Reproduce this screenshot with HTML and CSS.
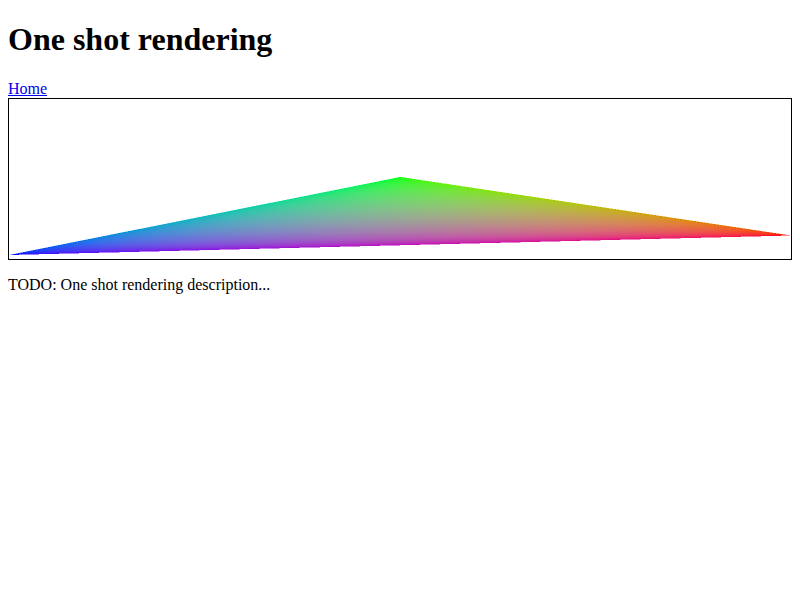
FILE: index.html
```html
<!DOCTYPE html>
<html lang="en">
<head>
  <meta charset="UTF-8" />
  <title>One shot rendering</title>
  <link rel="stylesheet" href="styles.css">
</head>
<body>
  <h1>One shot rendering</h1>
  <a href="#">Home</a>
  <canvas id="tela" class="tela" width="782" height="160"></canvas>
  <p>TODO: One shot rendering description...</p>
  <script src="script.js"></script>
</body>
</html>
```

FILE: styles.css
```css
body {
  margin: 0 8px 8px;
  font-family: "Liberation Serif", serif;
}

.tela {
  display: block;
  width: 100%;
  box-sizing: border-box;
  border: 1px solid #000;
}
```

FILE: script.js
```js
const canvas = document.getElementById("tela");
const ctx = canvas.getContext("2d");
const img = ctx.createImageData(canvas.width, canvas.height);

// canvas coords, one vertex per colour channel
const r = [782, 136.5];
const g = [391.5, 78];
const b = [0, 156];

const area = (g[0] - r[0]) * (b[1] - r[1]) - (g[1] - r[1]) * (b[0] - r[0]);

function weights(x, y) {
  return [
    ((g[0] - x) * (b[1] - y) - (g[1] - y) * (b[0] - x)) / area,
    ((b[0] - x) * (r[1] - y) - (b[1] - y) * (r[0] - x)) / area,
    ((r[0] - x) * (g[1] - y) - (r[1] - y) * (g[0] - x)) / area
  ];
}

// the colours blend in linear light
function srgb(c) {
  c = Math.min(1, Math.max(0, c));
  return 255 * (c <= 0.0031308 ? c * 12.92 : 1.055 * Math.pow(c, 1 / 2.4) - 0.055);
}

for (let y = 0; y < canvas.height; y++) {
  for (let x = 0; x < canvas.width; x++) {
    // 4 samples per pixel for the edges
    let hits = 0;
    for (let sy = 0; sy < 2; sy++) {
      for (let sx = 0; sx < 2; sx++) {
        const w = weights(x + 0.25 + sx * 0.5, y + 0.25 + sy * 0.5);
        if (w[0] >= 0 && w[1] >= 0 && w[2] >= 0) hits++;
      }
    }
    if (hits === 0) continue;

    const w = weights(x + 0.5, y + 0.5);
    const i = (y * canvas.width + x) * 4;
    img.data[i] = srgb(w[0]);
    img.data[i + 1] = srgb(w[1]);
    img.data[i + 2] = srgb(w[2]);
    img.data[i + 3] = hits * 63.75;
  }
}

ctx.putImageData(img, 0, 0);
```
